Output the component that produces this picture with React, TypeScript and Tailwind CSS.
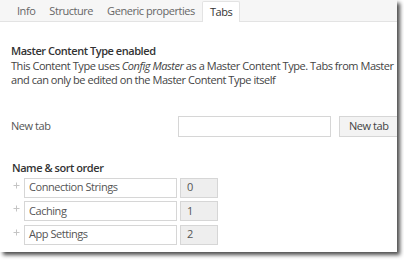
import React from "react";

function DragIcon() {
  return (
    <svg width="7" height="7" viewBox="0 0 7 7" className="mt-[4px] shrink-0">
      <path d="M3.5 0.5V6.5M0.5 3.5H6.5" stroke="#c4c4c4" strokeWidth="1" />
    </svg>
  );
}

function Row({ name, order }: { name: string; order: string }) {
  return (
    <div className="flex items-start h-[20px]">
      <div className="w-[12px] pl-[1px] flex justify-start">
        <DragIcon />
      </div>
      <div className="w-[153px] h-[20px] border border-[#d6d6d6] bg-white flex items-center pl-[4px] text-[#555]">
        {name}
      </div>
      <div className="ml-[3px] w-[38px] h-[20px] border border-[#d6d6d6] bg-[#eeeeee] flex items-center pl-[6px] text-[#555]">
        {order}
      </div>
    </div>
  );
}

export default function App() {
  const tabs = ["Info", "Structure", "Generic properties"];
  return (
    <div
      className="w-[404px] h-[260px] bg-white overflow-hidden"
      style={{ fontFamily: '"Open Sans", sans-serif' }}
    >
      <div className="w-[397px] h-[252px] bg-white shadow-[3px_3px_4px_rgba(0,0,0,0.7)] overflow-hidden text-[11px] tracking-[-0.45px] whitespace-nowrap">
        <div className="h-[22px] bg-[#f6f6f6] border-b border-[#e3e3e3] flex items-end pl-[10px]">
          {tabs.map((t) => (
            <div key={t} className="px-[7px] h-[20px] flex items-center text-[#666]">
              {t}
            </div>
          ))}
          <div className="px-[7px] h-[21px] -mb-[1px] flex items-center text-[#333] bg-white border border-b-0 border-[#e3e3e3] rounded-t-[2px]">
            Tabs
          </div>
        </div>

        <div className="pl-[11px] pt-[22px] leading-[14.5px] text-[#444]">
          <div className="font-semibold text-[#333]">Master Content Type enabled</div>
          <div>
            This Content Type uses <i>Config Master</i> as a Master Content Type. Tabs from Master
          </div>
          <div>and can only be edited on the Master Content Type itself</div>
        </div>

        <div className="flex items-center pl-[11px] mt-[28px] h-[21px]">
          <div className="w-[167px] shrink-0 text-[#555]">New tab</div>
          <div className="w-[153px] shrink-0 h-[21px] border border-[#d6d6d6] bg-white" />
          <div className="ml-[8px] shrink-0 h-[21px] px-[9px] border border-[#d6d6d6] bg-[#f3f3f3] flex items-center text-[#444]">
            New tab
          </div>
        </div>

        <div className="pl-[12px] mt-[24px] font-semibold text-[#333] leading-[14px]">Name &amp; sort order</div>
        <div className="pl-[12px] mt-[3px] flex flex-col gap-[3.5px]">
          <Row name="Connection Strings" order="0" />
          <Row name="Caching" order="1" />
          <Row name="App Settings" order="2" />
        </div>
      </div>
    </div>
  );
}
